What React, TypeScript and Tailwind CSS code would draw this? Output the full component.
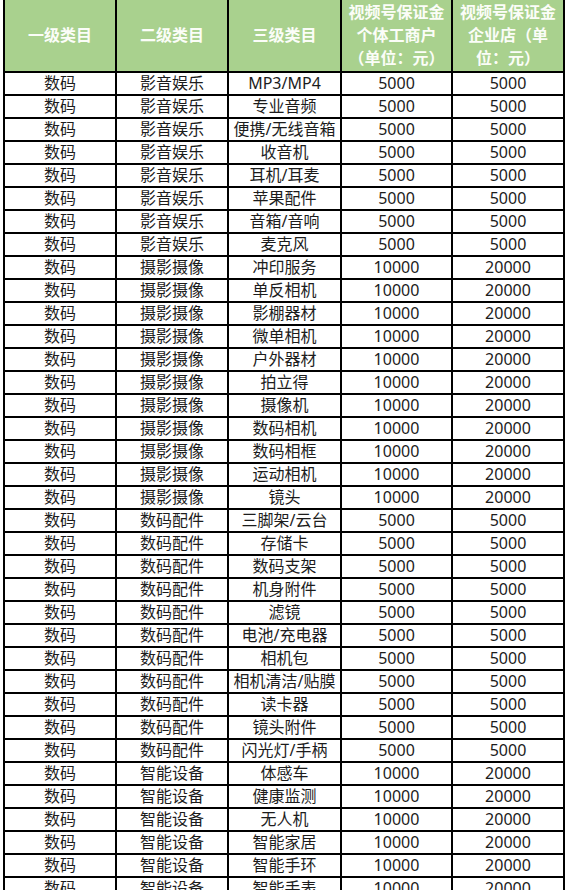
import React from 'react';

type Row = { c2: string; c3: string; a: string; b: string };

const groups: { name: string; a: string; b: string; items: string[] }[] = [
  {
    name: '影音娱乐',
    a: '5000',
    b: '5000',
    items: ['MP3/MP4', '专业音频', '便携/无线音箱', '收音机', '耳机/耳麦', '苹果配件', '音箱/音响', '麦克风'],
  },
  {
    name: '摄影摄像',
    a: '10000',
    b: '20000',
    items: ['冲印服务', '单反相机', '影棚器材', '微单相机', '户外器材', '拍立得', '摄像机', '数码相机', '数码相框', '运动相机', '镜头'],
  },
  {
    name: '数码配件',
    a: '5000',
    b: '5000',
    items: ['三脚架/云台', '存储卡', '数码支架', '机身附件', '滤镜', '电池/充电器', '相机包', '相机清洁/贴膜', '读卡器', '镜头附件', '闪光灯/手柄'],
  },
  {
    name: '智能设备',
    a: '10000',
    b: '20000',
    items: ['体感车', '健康监测', '无人机', '智能家居', '智能手环', '智能手表'],
  },
];

const rows: Row[] = groups.flatMap((g) => g.items.map((it) => ({ c2: g.name, c3: it, a: g.a, b: g.b })));

const th = 'border-2 border-black bg-[#a9d18e] text-[#fbfdf8] font-bold text-[16px] leading-[23px] p-0 align-middle text-center';
const td = 'border-2 border-black h-[23px] p-0 text-[16px] leading-[19px] text-[#1c1c1c] text-center align-middle whitespace-nowrap';

export default function App() {
  return (
    <div
      className="w-[569px] h-[890px] overflow-hidden bg-white pl-[3px]"
      style={{ fontFamily: '"Noto Sans", "Noto Sans CJK SC", sans-serif' }}
    >
      <table className="border-collapse table-fixed w-[562px] -mt-[2px]">
        <colgroup>
          <col className="w-[112px]" />
          <col className="w-[112px]" />
          <col className="w-[113px]" />
          <col className="w-[111px]" />
          <col className="w-[112px]" />
        </colgroup>
        <thead>
          <tr className="h-[73px]">
            <th className={th}>一级类目</th>
            <th className={th}>二级类目</th>
            <th className={th}>三级类目</th>
            <th className={th}>
              视频号保证金
              <br />
              个体工商户
              <br />
              （单位：元）
            </th>
            <th className={th}>
              视频号保证金
              <br />
              企业店（单
              <br />
              位：元）
            </th>
          </tr>
        </thead>
        <tbody>
          {rows.map((r, i) => (
            <tr key={i}>
              <td className={td}>数码</td>
              <td className={td}>{r.c2}</td>
              <td className={td}>{r.c3}</td>
              <td className={td}>{r.a}</td>
              <td className={td}>{r.b}</td>
            </tr>
          ))}
        </tbody>
      </table>
    </div>
  );
}
